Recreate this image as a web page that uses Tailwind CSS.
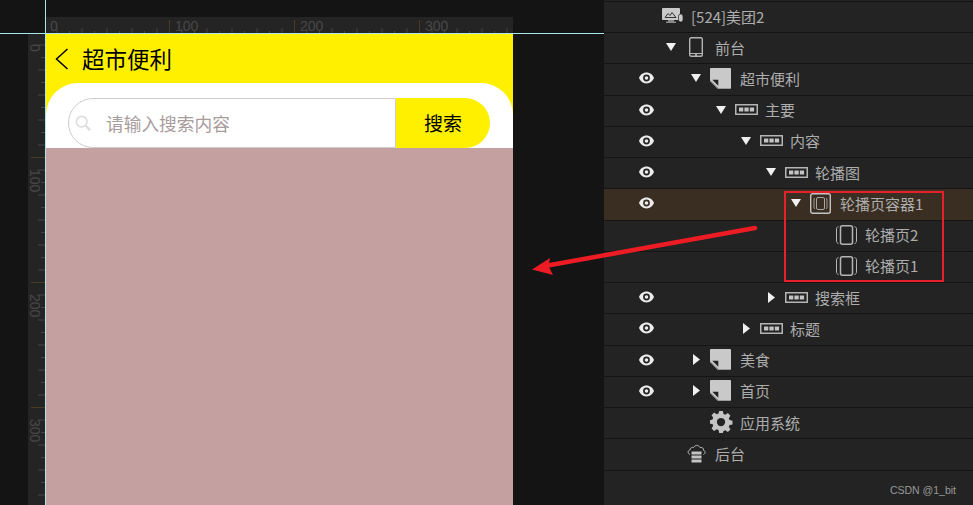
<!DOCTYPE html>
<html lang="zh">
<head>
    <meta charset="UTF-8">
    <title>轮播页容器</title>
    <script src="https://cdn.jsdelivr.net/npm/@tailwindcss/browser@4"></script>
</head>
<body class="bg-[#141414] font-['Noto_Sans_CJK_SC','Noto_Sans',sans-serif]">
    <!-- shared icons -->
    <svg class="hidden">
        <symbol id="eye" viewBox="0 0 15 12">
            <path fill-rule="evenodd" fill="#ececec" d="M7.5 .6C3.900 .6 1.200 3 0 6c1.200 3 3.900 5.400 7.500 5.400S13.800 9 15 6C13.800 3 11.100 .6 7.500 .6zM7.500 2.600a3.400 3.400 0 1 1 0 6.800a3.400 3.400 0 0 1 0-6.800zM7.500 4.200a1.800 1.800 0 1 0 0 3.600a1.800 1.800 0 0 0 0-3.600z"/>
        </symbol>
        <symbol id="page" viewBox="0 0 21 21">
            <path fill="#c9c9c9" d="M1 0h19a1 1 0 0 1 1 1v19a1 1 0 0 1-1 1H8L0 13V1a1 1 0 0 1 1-1z"/>
            <path fill="#232323" d="M2.300 11.700h6v6z"/>
            <path fill="#8a8a8a" d="M8 21h13v-.8H8.700L0 12v1z"/>
        </symbol>
        <symbol id="panel" viewBox="0 0 23 11">
            <rect x=".75" y=".75" width="21.500" height="9.500" fill="none" stroke="#b5b5b5" stroke-width="1.500"/>
            <rect x="4" y="3.500" width="4.300" height="4" fill="#c4c4c4"/>
            <rect x="9.400" y="3.500" width="4.300" height="4" fill="#c4c4c4"/>
            <rect x="14.800" y="3.500" width="4.300" height="4" fill="#c4c4c4"/>
        </symbol>
        <symbol id="swiper" viewBox="0 0 21 20">
            <rect x="4.500" y=".75" width="12" height="18.500" rx="2" fill="none" stroke="#b5b5b5" stroke-width="1.500"/>
            <path fill="none" stroke="#b5b5b5" d="M2.500 1.500C.9 2 .5 3 .5 4v12c0 1 .4 2 2 2.500M18.500 1.500c1.600 .5 2 1.500 2 2.500v12c0 1-.4 2-2 2.500"/>
        </symbol>
        <symbol id="down" viewBox="0 0 10 8"><path fill="#f0f0f0" d="M0 0h10L5 8z"/></symbol>
        <symbol id="right" viewBox="0 0 7 11"><path fill="#f0f0f0" d="M0 0l7 5.500L0 11z"/></symbol>
    </svg>

    <div class="relative flex w-[973px] h-[505px] overflow-hidden">
        <!-- canvas -->
        <div class="grid grid-cols-[28px_18px_467px_1fr] grid-rows-[17px_17px_1fr] w-[604px] shrink-0 bg-[#141414]">
            <div class="col-start-3 row-start-2 bg-[#242424]">
                <svg width="467" height="17" class="block">
                    <defs>
                        <pattern id="tickx" x="-2" width="25" height="17" patternUnits="userSpaceOnUse">
                            <rect x="0" y="14" width="1" height="3" fill="#444"/>
                            <rect x="12.500" y="11.500" width="1" height="5.500" fill="#444"/>
                        </pattern>
                    </defs>
                    <rect width="467" height="17" fill="url(#tickx)"/>
                    <path d="M123.500 3v14M248.500 3v14M373.500 3v14" stroke="#4a3c22"/>
                    <g fill="#484848" font-family="Liberation Sans" font-size="14">
                        <text x="4" y="14">0</text>
                        <text x="129" y="14">100</text>
                        <text x="254" y="14">200</text>
                        <text x="379" y="14">300</text>
                    </g>
                </svg>
            </div>
            <div class="col-start-2 row-start-3 bg-[#242424]">
                <svg width="18" height="471" class="block">
                    <defs>
                        <pattern id="ticky" y="-2" width="18" height="25" patternUnits="userSpaceOnUse">
                            <rect x="13" y="0" width="4" height="1" fill="#444"/>
                            <rect x="10" y="12.500" width="7" height="1" fill="#444"/>
                        </pattern>
                    </defs>
                    <rect width="18" height="471" fill="url(#ticky)"/>
                    <path d="M3 123.500h14M3 248.500h14M3 373.500h14" stroke="#4a3c22"/>
                    <g fill="#484848" font-family="Liberation Sans" font-size="14">
                        <text transform="translate(2 10) rotate(90)">0</text>
                        <text transform="translate(2 135) rotate(90)">100</text>
                        <text transform="translate(2 260) rotate(90)">200</text>
                        <text transform="translate(2 385) rotate(90)">300</text>
                    </g>
                </svg>
            </div>
            <!-- phone preview -->
            <div class="col-start-3 row-start-3 flex flex-col bg-[#fff000]">
                <div class="flex items-center h-[49px] pl-[9px]">
                    <svg width="14" height="22" viewBox="0 0 14 22" class="shrink-0"><path d="M12.500 1L1.500 11l11 10" fill="none" stroke="#000" stroke-width="1.500"/></svg>
                    <span class="ml-[13px] text-[22.500px] leading-none text-black">超市便利</span>
                </div>
                <div class="h-[65px] bg-white rounded-t-[32px] pl-[22px] pt-[15px]">
                    <div class="flex w-[422px] h-[50px]">
                        <div class="flex items-center flex-1 border border-[#cccccc] rounded-l-[25px] pl-[6px]">
                            <svg width="16" height="16" viewBox="0 0 18 18" class="shrink-0"><circle cx="7.500" cy="7.500" r="6" fill="none" stroke="#dedede" stroke-width="1.800"/><path d="M12 12l5 5" stroke="#dedede" stroke-width="2.500"/></svg>
                            <span class="ml-[15px] pt-[2px] text-[17.700px] leading-none text-[#a89c9c]">请输入搜索内容</span>
                        </div>
                        <div class="flex items-center justify-center w-[94px] pb-[2px] bg-[#fff000] rounded-r-[25px] text-[19px] leading-none text-black">搜索</div>
                    </div>
                </div>
                <div class="flex-1 bg-[#c4a0a0]"></div>
            </div>
        </div>

        <!-- outline panel -->
        <div class="flex flex-col flex-1 bg-[#232323] pt-px text-[15px] leading-none text-[#adadad] [&>div]:pb-[2px]">
            <div class="h-[32.100px] border-y border-[#141414] flex items-center pl-[58px]">
                <svg width="21" height="16" viewBox="0 0 21 16" class="shrink-0">
                    <path fill="#c9c9c9" d="M1 0h16a1 1 0 0 1 1 1v10a1 1 0 0 1-1 1H1a1 1 0 0 1-1-1V1a1 1 0 0 1 1-1z"/>
                    <path fill="#8a8a8a" d="M6 12h6v1.500h2V15H4v-1.500h2z"/>
                    <path fill="none" stroke="#333" d="M3 9.500l3-4 2 2 2-3 4 5z"/>
                    <rect x="16.500" y="6" width="4.500" height="8" rx="2.200" fill="#c9c9c9" stroke="#232323" stroke-width=".7"/>
                </svg>
                <span class="ml-[8px]">[524]美团2</span>
            </div>
            <div class="h-[31.250px] border-b border-[#141414] flex items-center pl-[57px]">
                <span class="w-5 flex justify-center"><svg width="10" height="8"><use href="#down"/></svg></span>
                <span class="w-[30px] flex justify-center">
                    <svg width="14" height="20" viewBox="0 0 14 20"><rect x=".7" y=".7" width="12.600" height="18.600" rx="1.500" fill="none" stroke="#b5b5b5" stroke-width="1.400"/><path d="M1 16.500h12" stroke="#b5b5b5"/><rect x="6" y="17.300" width="2" height="1.200" fill="#dcdcdc"/></svg>
                </span>
                <span class="ml-1">前台</span>
            </div>
            <div class="h-[31.250px] border-b border-[#141414] flex items-center">
                <span class="w-[57px] pl-[35px]"><svg width="15" height="12" class="block"><use href="#eye"/></svg></span>
                <span class="w-5 ml-[25px] flex justify-center"><svg width="10" height="8"><use href="#down"/></svg></span>
                <span class="w-[30px] flex justify-center"><svg width="21" height="21" class="mr-px"><use href="#page"/></svg></span>
                <span class="ml-1">超市便利</span>
            </div>
            <div class="h-[31.250px] border-b border-[#141414] flex items-center">
                <span class="w-[57px] pl-[35px]"><svg width="15" height="12" class="block"><use href="#eye"/></svg></span>
                <span class="w-5 ml-[50px] flex justify-center"><svg width="10" height="8"><use href="#down"/></svg></span>
                <span class="w-[30px] flex justify-center"><svg width="23" height="11"><use href="#panel"/></svg></span>
                <span class="ml-1">主要</span>
            </div>
            <div class="h-[31.250px] border-b border-[#141414] flex items-center">
                <span class="w-[57px] pl-[35px]"><svg width="15" height="12" class="block"><use href="#eye"/></svg></span>
                <span class="w-5 ml-[75px] flex justify-center"><svg width="10" height="8"><use href="#down"/></svg></span>
                <span class="w-[30px] flex justify-center"><svg width="23" height="11"><use href="#panel"/></svg></span>
                <span class="ml-1">内容</span>
            </div>
            <div class="h-[31.250px] border-b border-[#141414] flex items-center">
                <span class="w-[57px] pl-[35px]"><svg width="15" height="12" class="block"><use href="#eye"/></svg></span>
                <span class="w-5 ml-[100px] flex justify-center"><svg width="10" height="8"><use href="#down"/></svg></span>
                <span class="w-[30px] flex justify-center"><svg width="23" height="11"><use href="#panel"/></svg></span>
                <span class="ml-1">轮播图</span>
            </div>
            <div class="h-[31.250px] border-b border-[#141414] bg-[#3a2e22] flex items-center">
                <span class="w-[57px] pl-[35px]"><svg width="15" height="12" class="block"><use href="#eye"/></svg></span>
                <span class="w-5 ml-[125px] flex justify-center"><svg width="10" height="8"><use href="#down"/></svg></span>
                <span class="w-[30px] flex justify-center">
                    <svg width="21" height="21" viewBox="0 0 21 21" class="mr-px"><rect x=".7" y=".7" width="19.600" height="19.600" rx="2" fill="none" stroke="#c4c4c4" stroke-width="1.400"/><rect x="6.500" y="4.500" width="8" height="12" rx="1.500" fill="none" stroke="#a8a8a8"/><path d="M5 5c-.8 .4-1 1-1 2v7c0 1 .2 1.600 1 2M16 5c.8 .4 1 1 1 2v7c0 1-.2 1.600-1 2" fill="none" stroke="#a8a8a8" stroke-width=".9"/></svg>
                </span>
                <span class="ml-1">轮播页容器1</span>
            </div>
            <div class="h-[31.250px] border-b border-[#141414] flex items-center">
                <span class="w-[57px]"></span>
                <span class="w-5 ml-[150px]"></span>
                <span class="w-[30px] flex justify-center"><svg width="21" height="20"><use href="#swiper"/></svg></span>
                <span class="ml-1">轮播页2</span>
            </div>
            <div class="h-[31.250px] border-b border-[#141414] flex items-center">
                <span class="w-[57px]"></span>
                <span class="w-5 ml-[150px]"></span>
                <span class="w-[30px] flex justify-center"><svg width="21" height="20"><use href="#swiper"/></svg></span>
                <span class="ml-1">轮播页1</span>
            </div>
            <div class="h-[31.250px] border-b border-[#141414] flex items-center">
                <span class="w-[57px] pl-[35px]"><svg width="15" height="12" class="block"><use href="#eye"/></svg></span>
                <span class="w-5 ml-[100px] flex justify-center"><svg width="7" height="11"><use href="#right"/></svg></span>
                <span class="w-[30px] flex justify-center"><svg width="23" height="11"><use href="#panel"/></svg></span>
                <span class="ml-1">搜索框</span>
            </div>
            <div class="h-[31.250px] border-b border-[#141414] flex items-center">
                <span class="w-[57px] pl-[35px]"><svg width="15" height="12" class="block"><use href="#eye"/></svg></span>
                <span class="w-5 ml-[75px] flex justify-center"><svg width="7" height="11"><use href="#right"/></svg></span>
                <span class="w-[30px] flex justify-center"><svg width="23" height="11"><use href="#panel"/></svg></span>
                <span class="ml-1">标题</span>
            </div>
            <div class="h-[31.250px] border-b border-[#141414] flex items-center">
                <span class="w-[57px] pl-[35px]"><svg width="15" height="12" class="block"><use href="#eye"/></svg></span>
                <span class="w-5 ml-[25px] flex justify-center"><svg width="7" height="11"><use href="#right"/></svg></span>
                <span class="w-[30px] flex justify-center"><svg width="21" height="21" class="mr-px"><use href="#page"/></svg></span>
                <span class="ml-1">美食</span>
            </div>
            <div class="h-[31.250px] border-b border-[#141414] flex items-center">
                <span class="w-[57px] pl-[35px]"><svg width="15" height="12" class="block"><use href="#eye"/></svg></span>
                <span class="w-5 ml-[25px] flex justify-center"><svg width="7" height="11"><use href="#right"/></svg></span>
                <span class="w-[30px] flex justify-center"><svg width="21" height="21" class="mr-px"><use href="#page"/></svg></span>
                <span class="ml-1">首页</span>
            </div>
            <div class="h-[31.250px] border-b border-[#141414] flex items-center">
                <span class="w-[57px]"></span>
                <span class="w-5 ml-[25px]"></span>
                <span class="w-[30px] flex justify-center">
                    <svg width="24" height="22" viewBox="0 0 24 24"><path fill="#c4c4c4" fill-rule="evenodd" d="M10 0h4l.7 3.300 2 .8L19.500 2.300l2.800 2.800-1.800 2.800.8 2 3.200.7v4l-3.200.7-.8 2 1.800 2.800-2.800 2.800-2.800-1.800-2 .8L14 24h-4l-.7-3.200-2-.8-2.800 1.800-2.800-2.800 1.800-2.800-.8-2L0 14v-4l2.700-.7.8-2-1.800-2.800 2.800-2.800 2.800 1.800 2-.8zM12 7.500a4.500 4.500 0 1 0 0 9a4.500 4.500 0 0 0 0-9z"/></svg>
                </span>
                <span class="ml-1">应用系统</span>
            </div>
            <div class="h-[31.250px] border-b border-[#141414] flex items-center pl-[57px]">
                <span class="w-5"></span>
                <span class="w-[30px] flex justify-center">
                    <svg width="19" height="19" viewBox="0 0 19 19"><path d="M3 10.500C.5 9.500.5 6.500 3 6c0-2 2-3 3.500-2.500C8 1 11.500.5 13 3.500c2.500-.5 3.800 1 3.500 2.800 2.200.8 2.200 3.200 0 4.200" fill="none" stroke="#c4c4c4" stroke-width=".9"/><path d="M4.500 7.500h10v3h-10zM4.500 11.500h10v3h-10zM4.500 15.500h10v3h-10z" fill="#c4c4c4"/></svg>
                </span>
                <span class="ml-1">后台</span>
            </div>
            <div class="flex justify-end pt-[14px] pr-[17px] font-['Liberation_Sans',sans-serif] text-[10.500px] text-[#999999]">CSDN @1_bit</div>
        </div>

        <!-- guides -->
        <div class="absolute left-0 top-[33px] w-[604px] h-px bg-[#a8e8e8]"></div>
        <div class="absolute left-[45px] top-0 w-px h-[505px] bg-[#a8e8e8]"></div>

        <!-- red annotation -->
        <svg class="absolute inset-0" width="973" height="505">
            <rect x="785" y="192" width="158" height="89" fill="none" stroke="#e8202a" stroke-width="2"/>
            <path d="M755 228L545 266" stroke="#ed1c24" stroke-width="4.500" stroke-linecap="round"/>
            <path d="M532 269.500L550 258L548.500 266L553 275z" fill="#ed1c24"/>
        </svg>
    </div>
</body>
</html>
